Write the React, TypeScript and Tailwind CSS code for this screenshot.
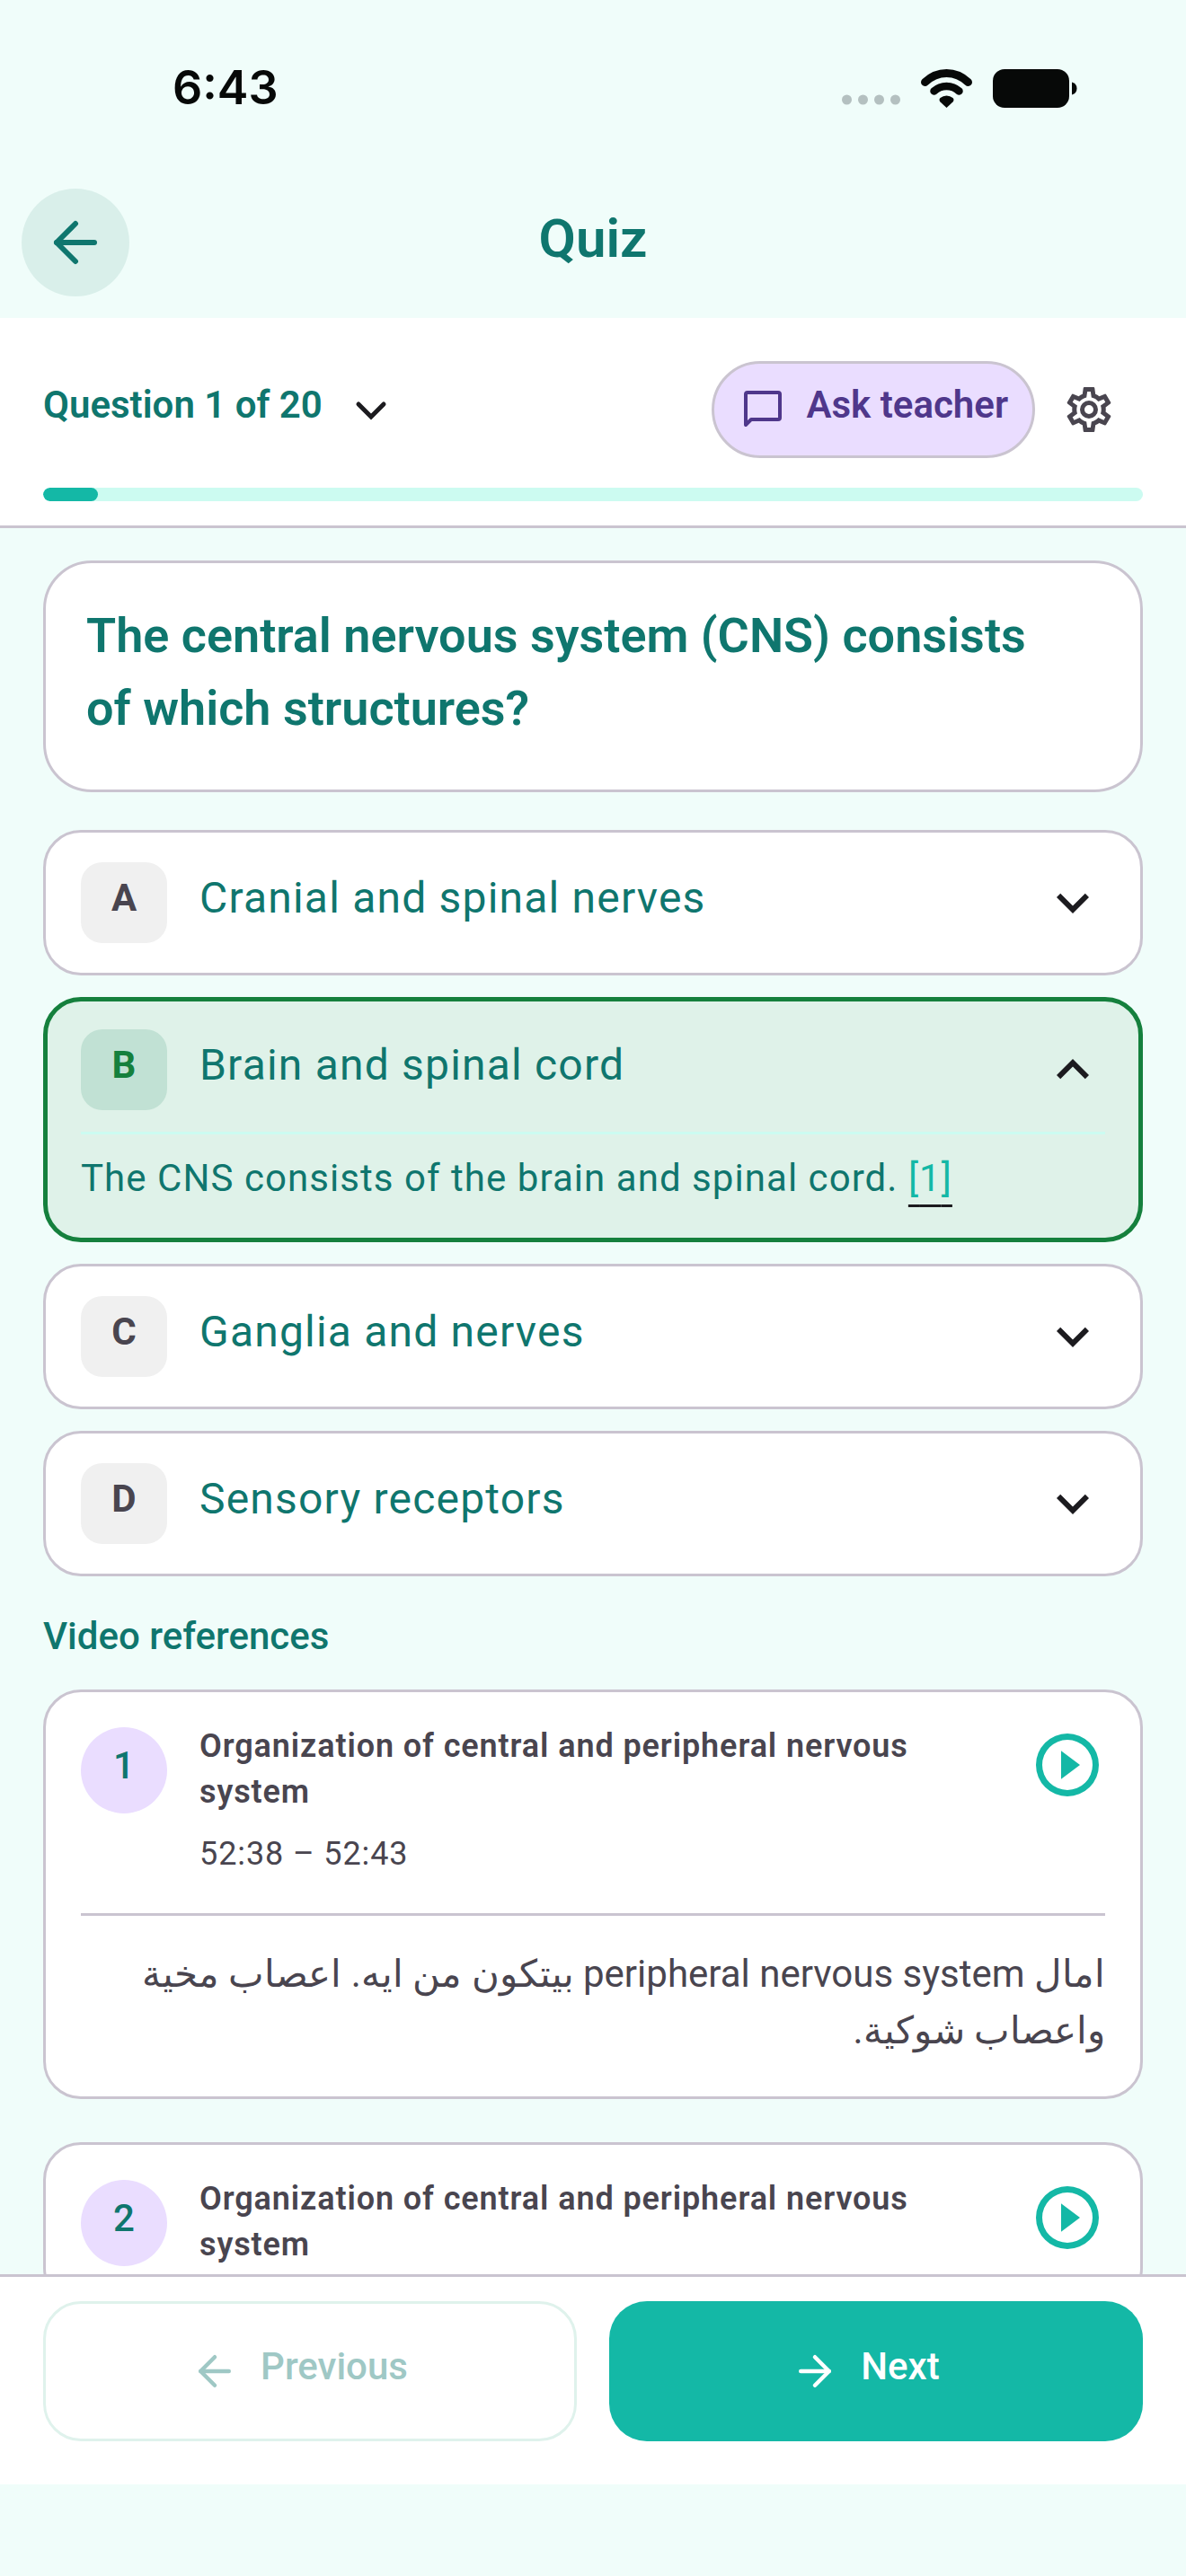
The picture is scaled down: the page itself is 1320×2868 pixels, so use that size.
import type { ReactNode } from "react";
import { ArrowLeft, ArrowRight } from "lucide-react";

interface Option {
  letter: string;
  text: string;
  explanation?: string;
  reference?: number;
}

interface VideoReference {
  id: number;
  title: string;
  time?: string;
  transcript?: string;
}

const options: Option[] = [
  { letter: "A", text: "Cranial and spinal nerves" },
  {
    letter: "B",
    text: "Brain and spinal cord",
    explanation: "The CNS consists of the brain and spinal cord.",
    reference: 1,
  },
  { letter: "C", text: "Ganglia and nerves" },
  { letter: "D", text: "Sensory receptors" },
];

const videos: VideoReference[] = [
  {
    id: 1,
    title: "Organization of central and peripheral nervous system",
    time: "52:38 – 52:43",
    transcript:
      "امال peripheral nervous system بيتكون من ايه. اعصاب مخية واعصاب شوكية.",
  },
  {
    id: 2,
    title: "Organization of central and peripheral nervous system",
  },
];

const current = 1;
const total = 20;

function Icon({ className, children }: { className: string; children: ReactNode }) {
  return (
    <svg viewBox="0 0 24 24" fill="currentColor" className={className} aria-hidden="true">
      {children}
    </svg>
  );
}

function StatusBar() {
  return (
    <div className="flex h-[186px] items-start justify-between pt-[66px] pr-[121px] pl-[192px]">
      <span className="font-[Inter,sans-serif] text-[52px] leading-[64px] font-semibold text-[#070908]">
        6:43
      </span>
      <div className="flex h-[64px] items-center gap-[23px] text-[#070908]">
        {/* No signal */}
        <svg viewBox="0 0 65 12" className="mt-[26px] h-[12px] w-[65px]" fill="#b4c0c0">
          <circle cx="5.5" cy="6" r="5.5" />
          <circle cx="23.5" cy="6" r="5.5" />
          <circle cx="41.5" cy="6" r="5.5" />
          <circle cx="59.5" cy="6" r="5.5" />
        </svg>
        {/* Wifi */}
        <svg viewBox="0 0 57 43" className="h-[43px] w-[57px]" fill="none">
          <path d="M4.5 14.5Q15 4.5 28.5 4.5T52.5 14.5" stroke="currentColor" strokeWidth="9" strokeLinecap="round" />
          <path d="M14.5 24.5Q20.5 19 28.5 19T42.5 24.5" stroke="currentColor" strokeWidth="8.5" strokeLinecap="round" />
          <path d="M28.5 43L21.5 36.5Q19.5 34 21.5 32Q24.5 29.5 28.5 29.5T35.5 32Q37.5 34 35.5 36.5Z" fill="currentColor" />
        </svg>
        {/* Battery */}
        <svg viewBox="0 0 94 43" className="h-[43px] w-[94px]" fill="currentColor">
          <rect width="85" height="43" rx="13" />
          <path d="M88 14.5Q93.5 16 93.5 21.5T88 28.5Z" />
        </svg>
      </div>
    </div>
  );
}

function OptionCard({ option }: { option: Option }) {
  const open = Boolean(option.explanation);

  return (
    <li
      className={`rounded-[42px] ${
        open
          ? "border-[5px] border-[#15803d] bg-[#dff2e9] px-[37px] py-[31px]"
          : "border-[3px] border-[#cac4d0] bg-white px-[39px] py-[33px]"
      }`}
    >
      <button type="button" aria-expanded={open} className="flex w-full items-center text-left">
        <span
          className={`flex h-[90px] w-[96px] items-center justify-center rounded-[24px] pb-[10px] text-[42px] leading-[60px] font-bold ${
            open ? "bg-[#c1e1d4] text-[#15803d]" : "bg-[#f0f0f0] text-[#49454f]"
          }`}
        >
          {option.letter}
        </span>
        <span className="ml-[36px] flex-1 pb-[10px] text-[48px] leading-[72px] tracking-wide">
          {option.text}
        </span>
        <Icon className="size-[72px] text-[#1c1b1f]">
          {open ? (
            <path d="M7.41 15.41 12 10.83l4.59 4.58L18 14l-6-6-6 6z" />
          ) : (
            <path d="M7.41 8.58 12 13.17l4.59-4.59L18 10l-6 6-6-6z" />
          )}
        </Icon>
      </button>
      {open && (
        <p className="mt-[24px] border-t-[3px] border-[#ccfbf1] pt-[19px] pb-[5px] text-[42px] leading-[60px] tracking-wide">
          {option.explanation}{" "}
          <a
            href="#video-1"
            className="text-[#14b8a6] underline decoration-[#1c1b1f] decoration-[3px] underline-offset-[15px]"
          >
            [{option.reference}]
          </a>
        </p>
      )}
    </li>
  );
}

function VideoCard({ video }: { video: VideoReference }) {
  return (
    <article
      id={`video-${video.id}`}
      className="rounded-[42px] border-[3px] border-[#cac4d0] bg-white p-[39px] text-[#49454f]"
    >
      <div className="flex items-start">
        <span className="flex size-[96px] items-center justify-center rounded-full bg-[#eaddff] pb-[10px] text-[42px] leading-[60px] font-medium text-[#0f766e]">
          {video.id}
        </span>
        <div className="ml-[36px] flex-1 text-[36px] tracking-wide">
          <h3 className="-mt-[4px] pr-[36px] leading-[51px] font-semibold">{video.title}</h3>
          {video.time && <p className="mt-[16px] leading-[54px]">{video.time}</p>}
        </div>
        <button type="button" aria-label="Play video" className="text-[#14b8a6]">
          <Icon className="size-[84px]">
            <path d="M12 2a10 10 0 1 0 0 20 10 10 0 0 0 0-20zm0 18a8 8 0 1 1 0-16 8 8 0 0 1 0 16zM10 16.5l6-4.5-6-4.5z" />
          </Icon>
        </button>
      </div>
      {video.transcript && (
        <p
          dir="rtl"
          className="mt-[39px] border-t-[3px] border-[#cac4d0] pt-[33px] pb-[3px] text-[42px] leading-[63px]"
        >
          {video.transcript}
        </p>
      )}
    </article>
  );
}

export default function App() {
  return (
    <div className="flex h-screen flex-col bg-[#f0fdfa] font-[Roboto,'Noto_Sans',sans-serif] text-[#0f766e]">
      <StatusBar />

      <header className="grid h-[168px] grid-cols-[1fr_auto_1fr] items-center px-[24px]">
        <button
          type="button"
          aria-label="Back"
          className="flex size-[120px] items-center justify-center rounded-full bg-[#d9efea]"
        >
          <ArrowLeft className="size-[72px]" />
        </button>
        <h1 className="pb-[8px] text-[60px] leading-[84px] font-semibold">Quiz</h1>
      </header>

      <section className="border-b-[3px] border-[#cac4d0] bg-white px-[48px] pt-[48px] pb-[27px]">
        <div className="flex items-center justify-between">
          <button type="button" className="flex items-center gap-[30px]">
            <span className="pb-[10px] text-[42px] leading-[60px] font-semibold">
              Question {current} of {total}
            </span>
            <svg viewBox="0 0 48 48" fill="none" className="size-[48px] text-[#1c1b1f]" aria-hidden="true">
              <path d="M10 18l14 14 14-14" stroke="currentColor" strokeWidth="5" strokeLinecap="round" />
            </svg>
          </button>
          <div className="flex items-center">
            <button
              type="button"
              className="flex h-[108px] items-center gap-[24px] rounded-full border-[3px] border-[#cac4d0] bg-[#eaddff] pr-[27px] pl-[30px] text-[#4f378b]"
            >
              <svg viewBox="0 0 48 48" fill="none" className="size-[48px]" aria-hidden="true">
                <path
                  d="M5 41V7q0-2 2-2h34q2 0 2 2v26q0 2-2 2H11z"
                  stroke="currentColor"
                  strokeWidth="4"
                  strokeLinejoin="round"
                />
              </svg>
              <span className="pb-[10px] text-[42px] leading-[60px] font-semibold">Ask teacher</span>
            </button>
            <button
              type="button"
              aria-label="Settings"
              className="flex h-[108px] w-[120px] items-center justify-center text-[#49454f]"
            >
              <Icon className="size-[60px]">
                <path d="M12 8a4 4 0 0 1 4 4 4 4 0 0 1-4 4 4 4 0 0 1-4-4 4 4 0 0 1 4-4m0 2a2 2 0 0 0-2 2 2 2 0 0 0 2 2 2 2 0 0 0 2-2 2 2 0 0 0-2-2M10 22C9.75 22 9.54 21.82 9.5 21.58L9.13 18.93C8.5 18.68 7.96 18.34 7.44 17.94L4.95 18.95C4.73 19.03 4.46 18.95 4.34 18.73L2.34 15.27C2.21 15.05 2.27 14.78 2.46 14.63L4.57 12.97L4.5 12L4.57 11L2.46 9.37C2.27 9.22 2.21 8.95 2.34 8.73L4.34 5.27C4.46 5.05 4.73 4.96 4.95 5.05L7.44 6.05C7.96 5.66 8.5 5.32 9.13 5.07L9.5 2.42C9.54 2.18 9.75 2 10 2H14C14.25 2 14.46 2.18 14.5 2.42L14.87 5.07C15.5 5.32 16.04 5.66 16.56 6.05L19.05 5.05C19.27 4.96 19.54 5.05 19.66 5.27L21.66 8.73C21.79 8.95 21.73 9.22 21.54 9.37L19.43 11L19.5 12L19.43 13L21.54 14.63C21.73 14.78 21.79 15.05 21.66 15.27L19.66 18.73C19.54 18.95 19.27 19.04 19.05 18.95L16.56 17.95C16.04 18.34 15.5 18.68 14.87 18.93L14.5 21.58C14.46 21.82 14.25 22 14 22H10M11.25 4L10.88 6.61C9.68 6.86 8.62 7.5 7.85 8.39L5.44 7.35L4.69 8.65L6.8 10.2C6.4 11.37 6.4 12.64 6.8 13.8L4.68 15.36L5.43 16.66L7.86 15.62C8.63 16.5 9.68 17.14 10.87 17.38L11.24 20H12.76L13.13 17.39C14.32 17.14 15.37 16.5 16.14 15.62L18.57 16.66L19.32 15.36L17.2 13.81C17.6 12.64 17.6 11.37 17.2 10.2L19.31 8.65L18.56 7.35L16.15 8.39C15.38 7.5 14.32 6.86 13.12 6.62L12.75 4H11.25Z" />
              </Icon>
            </button>
          </div>
        </div>
        <div
          role="progressbar"
          aria-label="Quiz progress"
          aria-valuenow={current}
          aria-valuemax={total}
          className="mt-[33px] h-[15px] overflow-hidden rounded-full bg-[#ccfbf1]"
        >
          <div
            className="h-full rounded-full bg-[#14b8a6]"
            style={{ width: `${(current / total) * 100}%` }}
          />
        </div>
      </section>

      <main className="min-h-0 flex-1 overflow-y-auto px-[48px] pt-[36px] [scrollbar-width:none]">
        <h2 className="rounded-[54px] border-[3px] border-[#cac4d0] bg-white pt-[40px] pr-[84px] pb-[50px] pl-[45px] text-[54px] leading-[81px] font-semibold">
          The central nervous system (CNS) consists of which structures?
        </h2>

        <ul className="mt-[42px] flex flex-col gap-[24px]">
          {options.map((option) => (
            <OptionCard key={option.letter} option={option} />
          ))}
        </ul>

        <h2 className="mt-[37px] mb-[29px] text-[42px] leading-[60px] font-medium">Video references</h2>
        <div className="flex flex-col gap-[48px]">
          {videos.map((video) => (
            <VideoCard key={video.id} video={video} />
          ))}
        </div>
      </main>

      <footer className="mb-[102px] grid grid-cols-2 gap-[36px] border-t-[3px] border-[#cac4d0] bg-white px-[48px] pt-[27px] pb-[48px] text-[42px] leading-[60px] font-medium">
        <button
          type="button"
          disabled
          className="flex h-[156px] items-center justify-center gap-[24px] rounded-[42px] border-[3px] border-[#dff2ec] pr-[24px] text-[#9fc8c5]"
        >
          <ArrowLeft className="size-[54px]" />
          <span className="pb-[10px]">Previous</span>
        </button>
        <button
          type="button"
          className="flex h-[156px] items-center justify-center gap-[24px] rounded-[42px] bg-[#14b8a6] pr-[24px] text-white"
        >
          <ArrowRight className="size-[54px]" />
          <span className="pb-[10px]">Next</span>
        </button>
      </footer>
    </div>
  );
}
